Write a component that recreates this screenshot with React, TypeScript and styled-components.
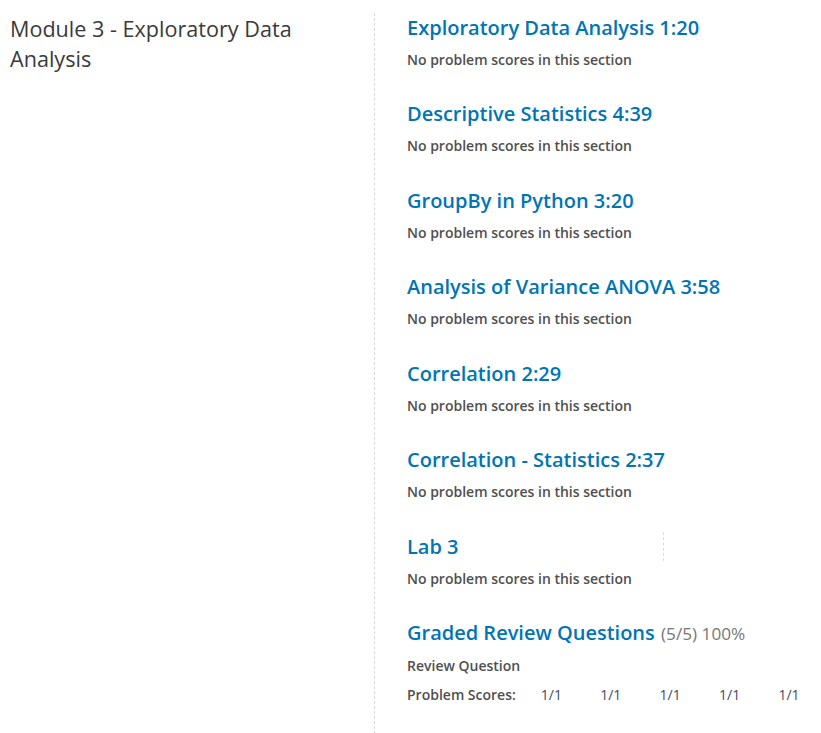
import React from "react";
import styled, { createGlobalStyle } from "styled-components";

const GlobalStyle = createGlobalStyle`
  html, body { margin: 0; padding: 0; background: #fff; }
  body { font-family: "Open Sans", "DejaVu Sans", sans-serif; }
`;

const Page = styled.div`
  display: flex;
  flex-direction: row;
  align-items: stretch;
  margin-top: 13px;
  min-height: 720px;
`;

const Side = styled.aside`
  width: 364px;
  padding: 1px 0 0 10px;
  flex-shrink: 0;
`;

const ModuleTitle = styled.h2`
  margin: 0;
  font-size: 21.6px;
  line-height: 30px;
  font-weight: 400;
  color: #3a3a3a;
  width: 300px;
`;

const Sections = styled.section`
  flex: 1;
  border-left: 1px dashed #d9d9d9;
  padding-left: 32px;
`;

const Section = styled.div`
  padding-bottom: 29.43px;
`;

const SectionTitle = styled.h3<{ $marked?: boolean }>`
  margin: 0;
  font-size: 20px;
  line-height: 29px;
  font-weight: 600;
  color: #0075b4;
  width: ${(p) => (p.$marked ? "256px" : "auto")};
  border-right: ${(p) => (p.$marked ? "1px dashed #dcdcdc" : "none")};
`;

const Grade = styled.span`
  font-size: 17.2px;
  font-weight: 400;
  color: #777;
  margin-left: 1px;
`;

const Note = styled.p`
  margin: 8px 0 0;
  font-size: 14px;
  line-height: 20px;
  font-weight: 600;
  color: #4f4f4f;
`;

const ScoreRow = styled.div`
  display: flex;
  align-items: baseline;
  margin-top: 9px;
  line-height: 20px;
  white-space: nowrap;
`;

const ScoreLabel = styled.span`
  flex-shrink: 0;
  font-size: 14px;
  font-weight: 600;
  color: #4f4f4f;
  margin-right: 25px;
`;

const Score = styled.span`
  flex-shrink: 0;
  font-size: 14px;
  font-weight: 400;
  color: #474865;
  width: 59.4px;
`;

const sections: { title: string; marked?: boolean }[] = [
  { title: "Exploratory Data Analysis 1:20" },
  { title: "Descriptive Statistics 4:39" },
  { title: "GroupBy in Python 3:20" },
  { title: "Analysis of Variance ANOVA 3:58" },
  { title: "Correlation 2:29" },
  { title: "Correlation - Statistics 2:37" },
  { title: "Lab 3", marked: true },
];

export default function App() {
  return (
    <>
      <GlobalStyle />
      <Page>
        <Side>
          <ModuleTitle>Module 3 - Exploratory Data Analysis</ModuleTitle>
        </Side>
        <Sections>
          {sections.map((s) => (
            <Section key={s.title}>
              <SectionTitle $marked={s.marked}>{s.title}</SectionTitle>
              <Note>No problem scores in this section</Note>
            </Section>
          ))}
          <Section>
            <SectionTitle>
              Graded Review Questions <Grade>(5/5) 100%</Grade>
            </SectionTitle>
            <Note>Review Question</Note>
            <ScoreRow>
              <ScoreLabel>Problem Scores:</ScoreLabel>
              {[0, 1, 2, 3, 4].map((i) => (
                <Score key={i}>1/1</Score>
              ))}
            </ScoreRow>
          </Section>
        </Sections>
      </Page>
    </>
  );
}
